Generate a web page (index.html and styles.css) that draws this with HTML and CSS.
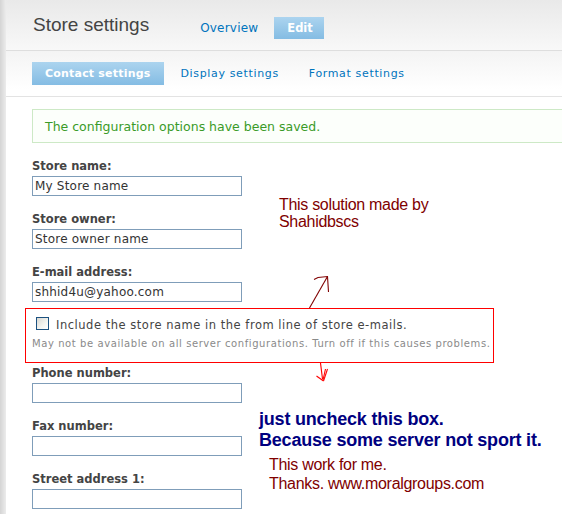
FILE: index.html
```html
<!DOCTYPE html>
<html lang="en">
<head>
<meta charset="utf-8">
<title>Store settings</title>
<link rel="stylesheet" href="styles.css">
</head>
<body>
<div class="page">
  <div class="strip"></div>
  <div class="main">
    <header class="header">
      <h1 class="title">Store settings</h1>
      <ul class="tabs primary">
        <li><a href="#">Overview</a></li>
        <li class="active"><a href="#">Edit</a></li>
      </ul>
    </header>
    <div class="subbar">
      <ul class="tabs secondary">
        <li class="active"><a href="#">Contact settings</a></li>
        <li><a href="#">Display settings</a></li>
        <li><a href="#">Format settings</a></li>
      </ul>
    </div>
    <div class="content">
      <div class="messages">The configuration options have been saved.</div>
      <form class="form">
        <div class="form-item">
          <label for="name">Store name:</label>
          <input class="form-text" id="name" type="text" value="My Store name">
        </div>
        <div class="form-item">
          <label for="owner">Store owner:</label>
          <input class="form-text" id="owner" type="text" value="Store owner name">
        </div>
        <div class="form-item">
          <label for="mail">E-mail address:</label>
          <input class="form-text" id="mail" type="text" value="shhid4u@yahoo.com">
        </div>
        <div class="form-item">
          <div class="checkbox-row">
            <input class="form-checkbox" id="incl" type="checkbox">
            <span class="checkbox-label">Include the store name in the from line of store e-mails.</span>
          </div>
          <div class="description">May not be available on all server configurations. Turn off if this causes problems.</div>
        </div>
        <div class="form-item">
          <label for="phone">Phone number:</label>
          <input class="form-text" id="phone" type="text">
        </div>
        <div class="form-item">
          <label for="fax">Fax number:</label>
          <input class="form-text" id="fax" type="text">
        </div>
        <div class="form-item">
          <label for="street">Street address 1:</label>
          <input class="form-text" id="street" type="text">
        </div>
      </form>
    </div>
  </div>
</div>

<div class="annotations">
  <div class="redbox"></div>
  <svg class="arrows" width="562" height="514" viewBox="0 0 562 514" xmlns="http://www.w3.org/2000/svg">
    <g fill="none" stroke="#800000" stroke-width="1.1">
      <polyline points="309.5,308 327.5,276.5"/>
      <polyline points="314,279.5 318,277.5 327.5,276.5 328.5,292"/>
    </g>
    <g fill="none" stroke="#ff0000" stroke-width="1.1">
      <polyline points="320.5,363 322.5,379"/>
      <polyline points="327.5,369 323.5,381"/>
      <polyline points="325.5,369 323,380"/>
      <polyline points="316.5,376 323.5,381"/>
    </g>
  </svg>
  <div class="note note-credit">This solution made by<br>Shahidbscs</div>
  <div class="note note-tip">just uncheck this box.<br>Because some server not sport it.</div>
  <div class="note note-thanks">This work for me.<br>Thanks. www.moralgroups.com</div>
</div>
</body>
</html>
```

FILE: styles.css
```css
html, body {
  margin: 0;
  padding: 0;
  height: 100%;
  overflow: hidden;
  background: #fff;
}

body {
  position: relative;
  font-family: "DejaVu Sans", Verdana, sans-serif;
  color: #444;
}

.page {
  display: flex;
  min-height: 514px;
}

.strip {
  width: 6px;
  flex: none;
  background: linear-gradient(to right, #d4d4d4, #ececec);
}

.main {
  flex: 1;
  min-width: 0;
}

/* Header */
.header {
  height: 51px;
  box-sizing: border-box;
  border-bottom: 1px solid #dedede;
  background: linear-gradient(#e9e9e9, #f8f8f8);
  display: flex;
  align-items: flex-start;
  padding: 14px 0 0 27px;
}

.title {
  margin: 0;
  font-family: "Liberation Sans", Arial, sans-serif;
  font-weight: normal;
  font-size: 19px;
  line-height: 22px;
  color: #444;
}

.tabs {
  list-style: none;
  margin: 0;
  padding: 0;
  display: flex;
}

.tabs a {
  display: block;
  text-decoration: none;
  color: #0074bd;
}

.primary {
  margin-left: 38px;
  margin-top: 3px;
  gap: 5px;
}

.primary a {
  height: 22px;
  line-height: 23px;
  padding: 0 11px 0 13px;
  font-size: 12px;
  letter-spacing: 0.2px;
}

.primary .active a {
  background: linear-gradient(#acd4ef, #84bce3);
  color: #fff;
  font-weight: bold;
  font-size: 11.5px;
  letter-spacing: 0;
}

/* Secondary tabs */
.subbar {
  height: 46px;
  box-sizing: border-box;
  border-bottom: 1px solid #e3e3e3;
  background: linear-gradient(#f4f4f4, #fff 85%);
  padding: 11px 0 0 26px;
}

.secondary {
  gap: 4px;
}

.secondary a {
  height: 23px;
  line-height: 23px;
  padding: 0 13px;
  font-size: 11px;
  letter-spacing: 0.65px;
}

.secondary .active a {
  background: linear-gradient(#acd4ef, #84bce3);
  color: #fff;
  font-weight: bold;
  letter-spacing: 0.2px;
}

/* Content */
.content {
  padding: 12px 0 0 26px;
}

.messages {
  margin-right: -20px;
  border: 1px solid #cde9c6;
  background: #fcfffb;
  color: #3a9b28;
  font-size: 12.5px;
  line-height: 16px;
  padding: 9px 12px 7px;
  margin-bottom: 16px;
}

.form-item {
  margin-bottom: 16px;
}

.form-item label {
  display: block;
  font-weight: bold;
  font-size: 11.5px;
  line-height: 15px;
  margin-bottom: 2px;
  color: #444;
}

.form-text {
  display: block;
  box-sizing: border-box;
  width: 210px;
  height: 20px;
  margin: 0;
  padding: 0 2px;
  border: 1px solid #7f9db9;
  border-radius: 0;
  background: #fff;
  font-family: "DejaVu Sans", Verdana, sans-serif;
  font-size: 12px;
  line-height: 18px;
  letter-spacing: 0.2px;
  color: #333;
  outline: none;
}

.checkbox-row {
  display: flex;
  align-items: flex-start;
  line-height: 15px;
}

.form-checkbox {
  appearance: none;
  -webkit-appearance: none;
  flex: none;
  box-sizing: border-box;
  width: 13px;
  height: 13px;
  margin: -1px 7px 0 4px;
  border: 1px solid #1c5180;
  background: linear-gradient(135deg, #d8d8d2, #f4f4f0 60%, #fff);
}

.checkbox-label {
  font-size: 11.5px;
  letter-spacing: 0.52px;
  color: #444;
}

.description {
  margin-top: 5px;
  font-size: 10px;
  line-height: 12px;
  letter-spacing: 0.58px;
  color: #8a8a8a;
}

/* Annotations drawn over the screenshot */
.annotations {
  position: absolute;
  left: 0;
  top: 0;
  width: 562px;
  height: 514px;
  pointer-events: none;
}

.arrows {
  position: absolute;
  left: 0;
  top: 0;
}

.redbox {
  position: absolute;
  left: 25px;
  top: 308px;
  width: 469px;
  height: 55px;
  box-sizing: border-box;
  border: 1px solid #ff0000;
}

.note {
  position: absolute;
  font-family: "Liberation Sans", Arial, sans-serif;
  white-space: nowrap;
}

.note-credit {
  left: 279px;
  top: 196px;
  font-size: 16px;
  line-height: 17px;
  letter-spacing: -0.3px;
  color: #800000;
}

.note-tip {
  left: 259px;
  top: 409px;
  font-size: 18px;
  line-height: 21px;
  font-weight: bold;
  letter-spacing: -0.2px;
  color: #000080;
}

.note-thanks {
  left: 269px;
  top: 455px;
  font-size: 16px;
  line-height: 19px;
  letter-spacing: -0.3px;
  color: #800000;
}
```
